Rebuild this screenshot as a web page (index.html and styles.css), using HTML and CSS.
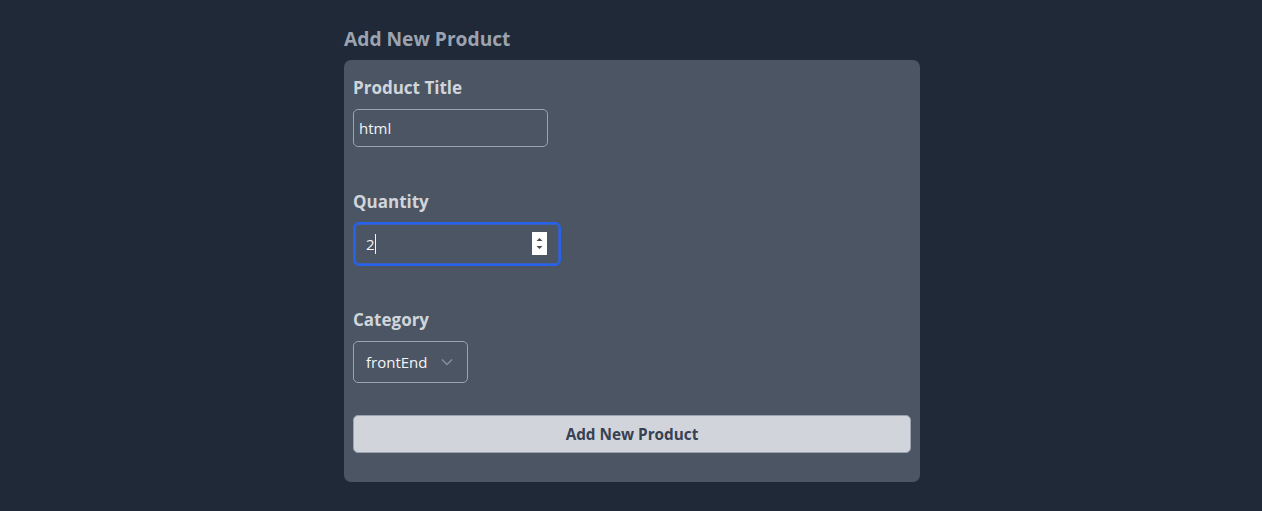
FILE: index.html
```html
<!DOCTYPE html>
<html lang="en">
<head>
<meta charset="utf-8">
<title>Add New Product</title>
<link rel="stylesheet" href="styles.css">
</head>
<body>
<main class="page">
  <section class="wrap">
    <h2 class="heading">Add New Product</h2>
    <form class="card">
      <div class="field field-title">
        <label class="label" for="title">Product Title</label>
        <input class="input input-title" id="title" type="text" value="html">
      </div>
      <div class="field field-qty">
        <label class="label" for="qty">Quantity</label>
        <div class="qty-box">
          <input class="input input-qty" id="qty" type="text" value="2">
          <span class="caret"></span>
          <span class="spinner">
            <svg width="15" height="23" viewBox="0 0 15 23">
              <rect width="15" height="23" fill="#ffffff"/>
              <path d="M4.5 9 L7.5 6 L10.5 9 Z" fill="#4b4b4b"/>
              <path d="M4.5 14 L7.5 17 L10.5 14 Z" fill="#4b4b4b"/>
            </svg>
          </span>
        </div>
      </div>
      <div class="field field-cat">
        <label class="label" for="cat">Category</label>
        <div class="select-box">
          <select class="select" id="cat">
            <option>frontEnd</option>
            <option>backEnd</option>
          </select>
          <svg class="chevron" width="12" height="8" viewBox="0 0 12 8">
            <path d="M1 1.5 L6 6.5 L11 1.5" fill="none" stroke="#8a919c" stroke-width="1.3"/>
          </svg>
        </div>
      </div>
      <button class="btn" type="button">Add New Product</button>
    </form>
  </section>
</main>
</body>
</html>
```

FILE: styles.css
```css
* { box-sizing: border-box; }
html, body {
  margin: 0;
  padding: 0;
  background: #1f2937;
}
body {
  font-family: "Open Sans", "Noto Sans", sans-serif;
  min-height: 511px;
}
.page {
  display: flex;
  justify-content: center;
  padding-top: 26px;
  padding-left: 2px;
}
.wrap {
  width: 576px;
}
.heading {
  margin: 0;
  font-size: 19.2px;
  line-height: 26px;
  font-weight: 700;
  color: #9ca3af;
  height: 34px;
}
.card {
  background: #4b5563;
  border-radius: 7px;
  padding: 14px 9px 29px 9px;
  display: flex;
  flex-direction: column;
}
.field {
  display: flex;
  flex-direction: column;
  align-items: flex-start;
}
.label {
  font-size: 17px;
  line-height: 28px;
  font-weight: 700;
  color: #d1d5db;
  margin-bottom: 7px;
}
.field-title { margin-bottom: 41px; }
.field-qty { margin-bottom: 40px; }
.field-qty .label { margin-bottom: 6px; }
.field-cat { margin-bottom: 32px; }
.input {
  font-family: "Open Sans", "Noto Sans", sans-serif;
  font-size: 15px;
  color: #f3f4f6;
  background: transparent;
  border: 1px solid #9ca3af;
  border-radius: 5px;
  outline: none;
}
.input-title {
  width: 195px;
  height: 38px;
  padding: 0 5px;
}
.qty-box {
  position: relative;
  width: 208px;
  height: 44px;
}
.input-qty {
  width: 208px;
  height: 44px;
  padding: 0 12px 0 11px;
  border: 2px solid #2563eb;
  border-radius: 6px;
  box-shadow: inset 0 0 0 1px #3b5fc0;
}
.caret {
  position: absolute;
  left: 22px;
  top: 12px;
  width: 1px;
  height: 20px;
  background: #f3f4f6;
}
.spinner {
  position: absolute;
  left: 179px;
  top: 10px;
  width: 15px;
  height: 23px;
  display: block;
}
.spinner svg { display: block; }
.select-box {
  position: relative;
  width: 115px;
  height: 42px;
}
.select {
  appearance: none;
  -webkit-appearance: none;
  width: 115px;
  height: 42px;
  font-family: "Open Sans", "Noto Sans", sans-serif;
  font-size: 15px;
  color: #f3f4f6;
  background: transparent;
  border: 1px solid #9ca3af;
  border-radius: 5px;
  padding: 0 12px;
  outline: none;
}
.chevron {
  position: absolute;
  left: 88px;
  top: 17px;
  pointer-events: none;
}
.btn {
  width: 558px;
  height: 38px;
  background: #d1d5db;
  color: #374151;
  border: 1px solid #9ca3af;
  border-radius: 5px;
  font-family: "Open Sans", "Noto Sans", sans-serif;
  font-size: 15.3px;
  font-weight: 700;
  cursor: pointer;
}
```
